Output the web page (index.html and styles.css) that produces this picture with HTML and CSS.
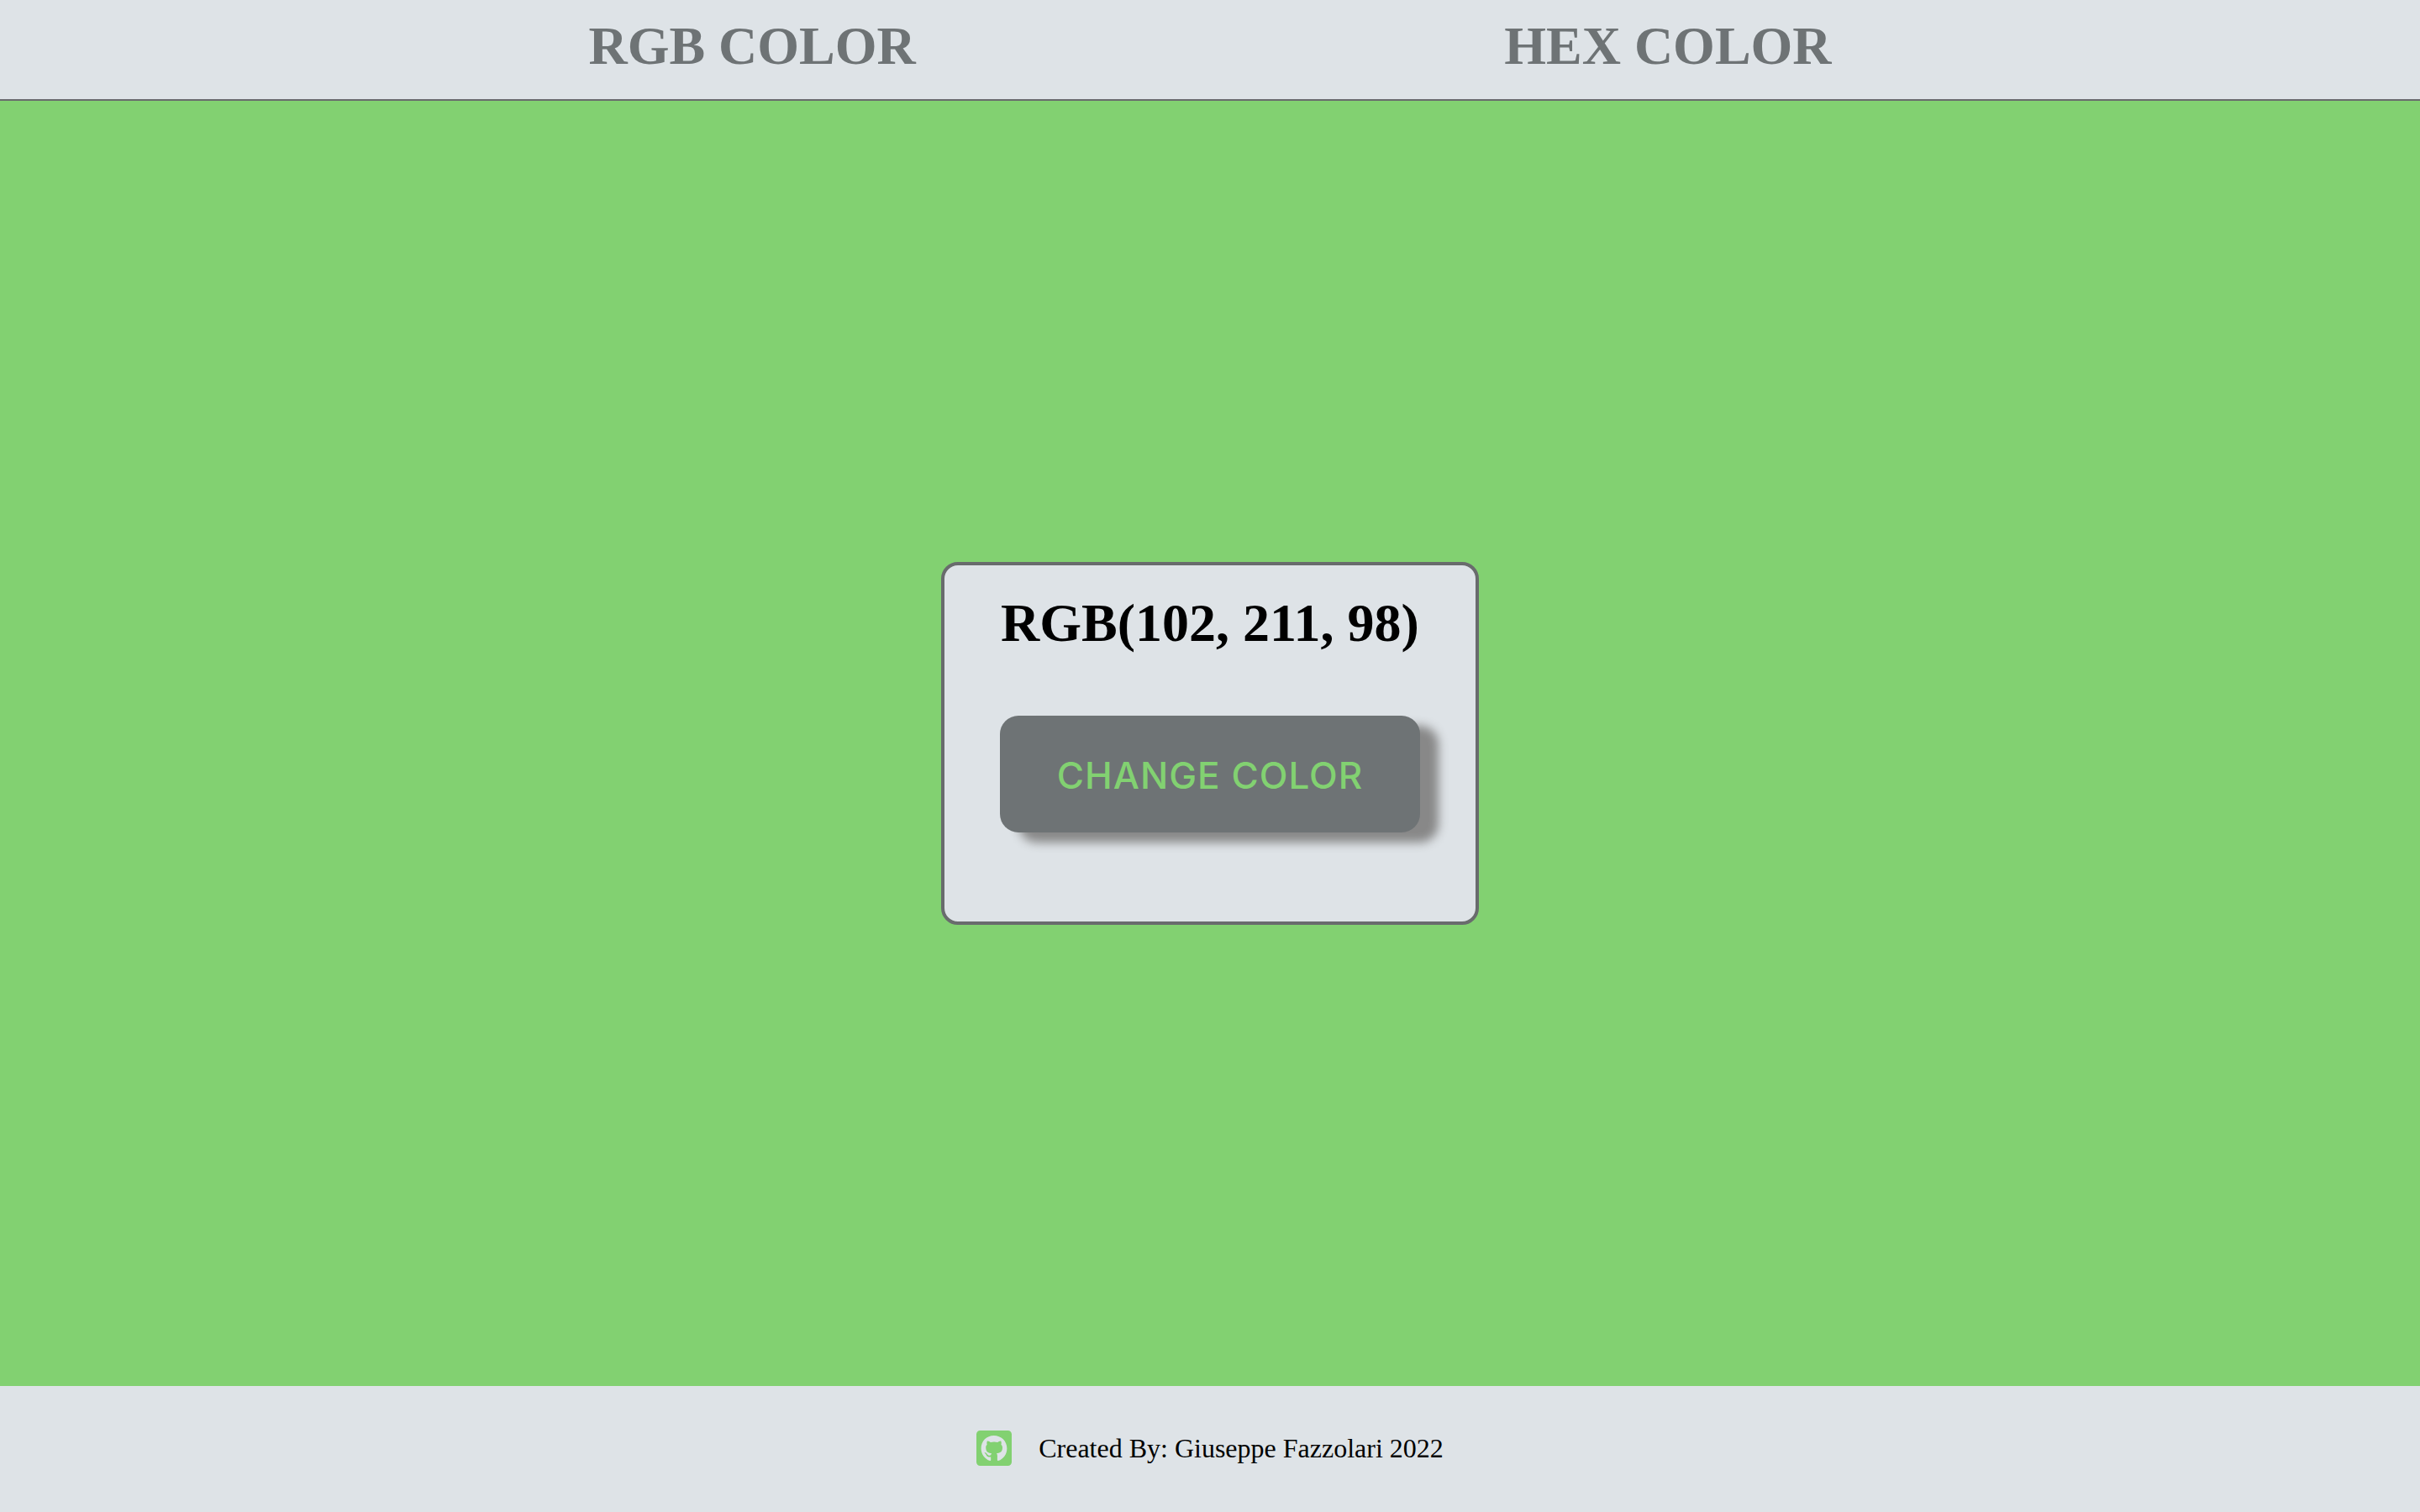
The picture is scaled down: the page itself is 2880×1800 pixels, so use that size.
FILE: index.html
```html
<!DOCTYPE html>
<html lang="en">
<head>
<meta charset="utf-8">
<meta name="viewport" content="width=device-width, initial-scale=1">
<title>Color Generator</title>
<link rel="stylesheet" href="styles.css">
</head>
<body>
<header class="modes">
  <a class="mode" href="#rgb">RGB COLOR</a>
  <a class="mode" href="#hex">HEX COLOR</a>
</header>
<main class="stage">
  <section class="card">
    <h1 class="value">RGB(102, 211, 98)</h1>
    <button class="change" type="button">CHANGE COLOR</button>
  </section>
</main>
<footer class="credits">
  <a class="github" href="#github" aria-label="GitHub">
    <svg viewBox="0 32 448 448" aria-hidden="true"><path d="M400 32H48C21.500 32 0 53.500 0 80v352c0 26.500 21.500 48 48 48h352c26.500 0 48-21.500 48-48V80c0-26.500-21.500-48-48-48zM277.300 415.700c-8.400 1.500-11.500-3.700-11.500-8 0-5.400.2-33 .2-55.300 0-15.600-5.200-25.500-11.300-30.700 37-4.100 76-9.200 76-73.100 0-18.200-6.500-27.300-17.100-39 1.700-4.300 7.400-22-1.700-45-13.900-4.300-45.700 17.900-45.700 17.900-13.200-3.700-27.500-5.600-41.600-5.600-14.100 0-28.400 1.900-41.600 5.600 0 0-31.800-22.200-45.700-17.900-9.100 22.900-3.500 40.600-1.700 45-10.600 11.700-15.600 20.800-15.600 39 0 63.600 37.300 69 74.300 73.100-4.800 4.300-9.100 11.700-10.600 22.300-9.500 4.300-33.800 11.700-48.300-13.900-9.100-15.800-25.500-17.100-25.500-17.100-16.200-.2-1.100 10.200-1.100 10.200 10.800 5 18.400 24.200 18.400 24.200 9.700 29.700 56.100 19.700 56.100 19.700 0 13.900.2 36.500.2 40.600 0 4.300-3 9.500-11.500 8-66-22.100-112.200-84.900-112.200-158.300 0-91.800 70.200-161.500 162-161.500S388 165.600 388 257.400c.1 73.400-44.700 136.300-110.700 158.300z"/></svg>
  </a>
  <p class="author">Created By: Giuseppe Fazzolari 2022</p>
</footer>
</body>
</html>
```
FILE: styles.css
```css
* {
  box-sizing: border-box;
}

body {
  display: flex;
  flex-direction: column;
  min-height: 100vh;
  margin: 0;
  background: #82d171;
  color: #000;
  font-family: "Liberation Serif", "Times New Roman", serif;
}

.modes {
  display: flex;
  justify-content: space-evenly;
  padding: 18px 0 26px;
  border-bottom: 2px solid #696b6d;
  background: #dee3e7;
}

.mode {
  color: #6e7375;
  font-size: 64px;
  font-weight: 700;
  line-height: 74px;
  text-decoration: none;
}

.stage {
  display: flex;
  flex: 1;
  align-items: center;
  justify-content: center;
}

.card {
  display: flex;
  flex-direction: column;
  align-items: center;
  min-width: 640px;
  padding: 32px 66px 106px;
  border: 4px solid #696b6d;
  border-radius: 20px;
  background: #dee3e7;
}

.value {
  margin: 0 0 73px;
  font-size: 64px;
  line-height: 74px;
}

.change {
  width: 100%;
  padding: 44px 0 41px;
  border: 0;
  border-radius: 22px;
  background: #6e7375;
  box-shadow: 22px 12px 12px #888;
  color: #82d171;
  font-family: Inter, sans-serif;
  font-size: 44px;
  font-weight: 500;
  line-height: 54px;
  letter-spacing: 1px;
}

.credits {
  display: flex;
  align-items: center;
  justify-content: center;
  gap: 32px;
  padding: 47px 0 49px;
  background: #dee3e7;
}

.github svg {
  display: block;
  width: 42px;
  height: 42px;
  fill: #82d171;
}

.author {
  margin: 0;
  font-size: 32px;
  line-height: 54px;
}
```
